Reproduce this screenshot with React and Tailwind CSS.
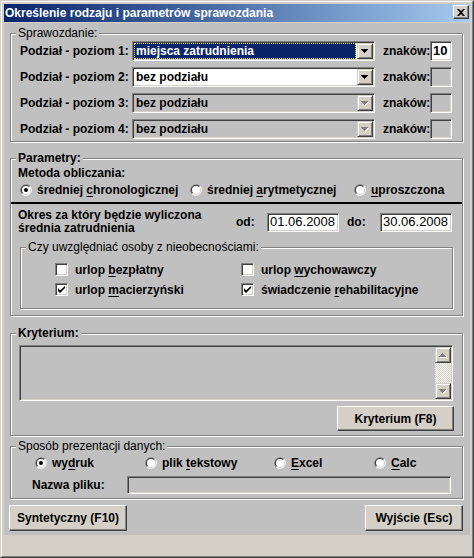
import React from "react";

// klasyczne ramki Windows 2000
const sunken =
  "border border-t-[#808080] border-l-[#808080] border-b-white border-r-white shadow-[inset_1px_1px_0_#404040,inset_-1px_-1px_0_#d4d0c8]";
const raised =
  "border border-t-white border-l-white border-b-[#404040] border-r-[#404040] shadow-[inset_-1px_-1px_0_#808080] bg-[#d4d0c8]";
const raisedSmall =
  "border border-t-[#d4d0c8] border-l-[#d4d0c8] border-b-[#404040] border-r-[#404040] shadow-[inset_1px_1px_0_#ffffff,inset_-1px_-1px_0_#808080] bg-[#d4d0c8]";

function Arrow({ up, disabled }) {
  const d = up
    ? "M3 0h1v1H3z M2 1h3v1H2z M1 2h5v1H1z M0 3h7v1H0z"
    : "M0 0h7v1H0z M1 1h5v1H1z M2 2h3v1H2z M3 3h1v1H3z";
  return (
    <svg width="8" height="5" viewBox="0 0 8 5">
      {disabled && <path d={d} fill="#ffffff" transform="translate(1 1)" />}
      <path d={d} fill={disabled ? "#808080" : "#000000"} />
    </svg>
  );
}

function Group({ title, bold, className = "", children }) {
  return (
    <div
      className={`relative border border-[#808080] shadow-[inset_1px_1px_0_#ffffff,1px_1px_0_#ffffff] ${className}`}
    >
      <span
        className={`absolute -top-[8px] left-[5px] bg-[#c0c0c0] px-[2px] leading-[14px] ${
          bold ? "font-bold" : "font-normal"
        }`}
      >
        {title}
      </span>
      {children}
    </div>
  );
}

function Key({ pre = "", k, post = "" }) {
  return (
    <span>
      {pre}
      <span className="underline underline-offset-[2px]">{k}</span>
      {post}
    </span>
  );
}

function Radio({ checked, children, className = "" }) {
  return (
    <div className={`flex h-[14px] items-center gap-[5px] ${className}`}>
      <svg width="12" height="12" viewBox="0 0 12 12" className="shrink-0">
        <path d="M1.76 10.24 A6 6 0 0 1 10.24 1.76 Z" fill="#808080" />
        <path d="M10.24 1.76 A6 6 0 0 1 1.76 10.24 Z" fill="#ffffff" />
        <path d="M2.46 9.54 A5 5 0 0 1 9.54 2.46 Z" fill="#404040" />
        <path d="M9.54 2.46 A5 5 0 0 1 2.46 9.54 Z" fill="#d4d0c8" />
        <circle cx="6" cy="6" r="4" fill="#ffffff" />
        {checked && <circle cx="6" cy="6" r="2" fill="#000000" />}
      </svg>
      <span className="whitespace-nowrap">{children}</span>
    </div>
  );
}

function Check({ checked, children, className = "" }) {
  return (
    <div className={`flex h-[13px] items-center gap-[7px] ${className}`}>
      <div className={`h-[13px] w-[13px] shrink-0 bg-white ${sunken}`}>
        {checked && (
          <svg width="11" height="11" viewBox="0 0 11 11">
            <path d="M2 4v3l2 2 5-5V2L4 6.5z" fill="#000000" />
          </svg>
        )}
      </div>
      <span className="whitespace-nowrap">{children}</span>
    </div>
  );
}

function Combo({ value, selected, disabled }) {
  return (
    <div
      className={`flex h-[20px] w-[243px] p-[1px] ${sunken} ${disabled ? "bg-[#c0c0c0]" : "bg-white"}`}
    >
      <div className="flex flex-1 pr-[1px]">
        <span
          className={`flex h-full w-full items-center pl-[2px] ${
            selected
              ? "bg-[#0a246a] text-white outline-1 outline-dotted outline-[#e8e060] -outline-offset-1"
              : ""
          }`}
        >
          {value}
        </span>
      </div>
      <div className={`flex h-[16px] w-[16px] items-center justify-center ${raisedSmall}`}>
        <Arrow disabled={disabled} />
      </div>
    </div>
  );
}

function PoziomRow({ n, value, selected, disabled, chars }) {
  return (
    <div className="flex h-[20px] items-center">
      <span className="w-[112px] whitespace-nowrap">Podział - poziom {n}:</span>
      <Combo value={value} selected={selected} disabled={disabled} />
      <span className="ml-[8px] w-[47px]">znaków:</span>
      <div
        className={`flex h-[20px] w-[22px] items-center pl-[2px] text-[13px] ${sunken} ${
          chars ? "bg-white" : "bg-[#c0c0c0]"
        }`}
      >
        {chars}
      </div>
    </div>
  );
}

export default function App() {
  return (
    <div className="font-['Liberation_Sans',Arial,sans-serif] text-[12px] leading-[14px] font-bold text-black">
      <div className="h-[558px] w-[474px] border border-t-[#d4d0c8] border-l-[#d4d0c8] border-b-[#404040] border-r-[#404040] bg-[#d4d0c8]">
        <div className="flex h-full flex-col border border-t-white border-l-white border-b-[#808080] border-r-[#808080] p-[2px]">
          {/* pasek tytułu */}
          <div className="flex h-[18px] items-start justify-between bg-linear-to-r from-[#0a246a] to-[#a6caf0] pl-[1px] pr-[1px]">
            <span className="mt-[2px] text-white">Określenie rodzaju i parametrów sprawozdania</span>
            <div className={`mt-[1px] flex h-[14px] w-[16px] items-center justify-center ${raised}`}>
              <svg width="8" height="7" viewBox="0 0 8 7">
                <path
                  d="M0 0h2l2 2 2-2h2L5 3.5 8 7H6L4 5 2 7H0l3-3.5z"
                  fill="#000000"
                />
              </svg>
            </div>
          </div>

          {/* formularz */}
          <div className="mt-[1px] flex h-[512px] flex-col bg-[#c0c0c0] pt-[10px] pr-[7px] pb-[4px] pl-[6px]">
            <Group title="Sprawozdanie:" className="flex flex-col gap-[6px] pt-[7px] pb-[2px] pl-[9px]">
              <PoziomRow n={1} value="miejsca zatrudnienia" selected chars="10" />
              <PoziomRow n={2} value="bez podziału" />
              <PoziomRow n={3} value="bez podziału" disabled />
              <PoziomRow n={4} value="bez podziału" disabled />
            </Group>

            <Group title="Parametry:" bold className="mt-[16px] pt-[7px] pb-[6px]">
              <div className="pl-[7px]">Metoda obliczania:</div>
              <div className="mt-[2px] flex h-[16px] items-center pl-[9px]">
                <Radio checked className="w-[170px]">
                  <Key pre="średniej " k="c" post="hronologicznej" />
                </Radio>
                <Radio className="w-[164px]">
                  <Key pre="średniej " k="a" post="rytmetycznej" />
                </Radio>
                <Radio>
                  <Key k="u" post="proszczona" />
                </Radio>
              </div>
              <div className="mt-[4px] h-[2px] bg-black" />
              <div className="mt-[5px] flex h-[26px] items-center pl-[7px]">
                <div className="w-[218px] leading-[13px]">
                  Okres za który będzie wyliczona
                  <br />
                  średnia zatrudnienia
                </div>
                <span className="w-[31px]">od:</span>
                <div className={`flex h-[19px] w-[72px] items-center bg-white pl-[2px] text-[13px] font-normal ${sunken}`}>
                  01.06.2008
                </div>
                <span className="ml-[8px] w-[33px]">do:</span>
                <div className={`flex h-[19px] w-[72px] items-center bg-white pl-[2px] text-[13px] font-normal ${sunken}`}>
                  30.06.2008
                </div>
              </div>
              <Group
                title="Czy uwzględniać osoby z nieobecnościami:"
                className="mt-[12px] mr-[9px] ml-[9px] flex flex-col gap-[7px] pt-[15px] pb-[12px] pl-[34px]"
              >
                <div className="flex">
                  <Check className="w-[186px]">
                    <Key pre="urlop " k="b" post="ezpłatny" />
                  </Check>
                  <Check>
                    <Key pre="urlop " k="w" post="ychowawczy" />
                  </Check>
                </div>
                <div className="flex">
                  <Check checked className="w-[186px]">
                    <Key pre="urlop " k="m" post="acierzyński" />
                  </Check>
                  <Check checked>
                    <Key pre="świadczenie " k="r" post="ehabilitacyjne" />
                  </Check>
                </div>
              </Group>
            </Group>

            <Group title="Kryterium:" bold className="mt-[17px] flex flex-col pt-[11px] pb-[4px]">
              <div className={`mr-[9px] ml-[8px] flex h-[56px] justify-end bg-[#c0c0c0] p-[1px] ${sunken}`}>
                <div className="flex w-[16px] flex-col">
                  <div className={`flex h-[16px] items-center justify-center ${raisedSmall}`}>
                    <Arrow up disabled />
                  </div>
                  <div className="flex-1 bg-[repeating-conic-gradient(#ffffff_0%_25%,#d4d0c8_0%_50%)] bg-[length:2px_2px]" />
                  <div className={`flex h-[16px] items-center justify-center ${raisedSmall}`}>
                    <Arrow disabled />
                  </div>
                </div>
              </div>
              <div className={`mt-[5px] mr-[8px] flex h-[25px] w-[117px] items-center justify-center self-end ${raised}`}>
                Kryterium (F8)
              </div>
            </Group>

            <Group title="Sposób prezentacji danych:" className="mt-[10px] pt-[9px] pb-[4px]">
              <div className="flex pl-[24px]">
                <Radio checked className="w-[110px]">
                  <Key pre="wy" k="d" post="ruk" />
                </Radio>
                <Radio className="w-[129px]">
                  <Key pre="plik " k="t" post="ekstowy" />
                </Radio>
                <Radio className="w-[100px]">
                  <Key k="E" post="xcel" />
                </Radio>
                <Radio>
                  <Key k="C" post="alc" />
                </Radio>
              </div>
              <div className="mt-[6px] flex h-[18px] items-center pl-[21px]">
                <span className="w-[95px]">Nazwa pliku:</span>
                <div className={`h-[18px] w-[324px] bg-[#c0c0c0] ${sunken}`} />
              </div>
            </Group>

            <div className="mt-[6px] -ml-[1px] flex justify-between">
              <div className={`flex h-[26px] w-[118px] items-center justify-center ${raised}`}>
                Syntetyczny (F10)
              </div>
              <div className={`flex h-[26px] w-[98px] items-center justify-center ${raised}`}>
                Wyjście (Esc)
              </div>
            </div>
          </div>

          <div className="flex-1 bg-[#d4d0c8]" />
        </div>
      </div>
    </div>
  );
}
